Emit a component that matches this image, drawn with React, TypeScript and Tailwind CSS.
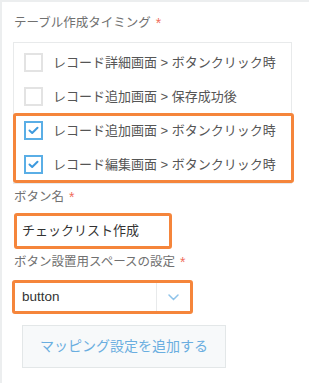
const FONT = "font-['Liberation_Sans','Noto_Sans_CJK_JP',sans-serif]";

interface CheckRowProps {
  label: string;
  checked?: boolean;
}

function CheckRow({ label, checked }: CheckRowProps) {
  return (
    <div className="flex h-[34px] items-center pl-[10px]">
      <span
        className={
          "flex h-[19px] w-[19px] items-center justify-center border-2 bg-white " +
          (checked ? "border-[#5aaee6]" : "border-[#e3e3e3]")
        }
      >
        {checked && (
          <svg width="11" height="9" viewBox="0 0 11 9" fill="none">
            <path d="M1.5 4.5 L4.2 7 L9.5 1.8" stroke="#3d9ade" strokeWidth="2" strokeLinecap="round" strokeLinejoin="round" />
          </svg>
        )}
      </span>
      <span className="ml-[10px] text-[13px] leading-none text-[#555]">{label}</span>
    </div>
  );
}

function Label({ text }: { text: string }) {
  return (
    <div className="flex h-[18px] items-center text-[12.5px] leading-none text-[#707070]">
      {text}
      <span className="ml-[5px] text-[14px] text-[#f06d5b]">*</span>
    </div>
  );
}

export default function App() {
  return (
    <div className={`${FONT} h-[383px] w-[309px] overflow-hidden border-l-2 border-t-2 border-[#eceeef] bg-white`}>
      <div className="pl-[12px] pr-[16px] pt-[12px]">
        <Label text="テーブル作成タイミング" />

        {/* Timing checkboxes */}
        <div className="relative mt-[10px] w-[279px] -ml-px border border-[#e8eaeb] pb-[2px] pt-[2px]">
          <CheckRow label="レコード詳細画面 > ボタンクリック時" />
          <CheckRow label="レコード追加画面 > 保存成功後" />
          <CheckRow label="レコード追加画面 > ボタンクリック時" checked />
          <CheckRow label="レコード編集画面 > ボタンクリック時" checked />
          {/* highlight */}
          <div className="absolute left-[-1px] top-[70px] h-[70px] w-[281px] rounded-[3px] border-[3.5px] border-[#f5853b]" />
        </div>

        <div className="mt-[4px]">
          <Label text="ボタン名" />
        </div>
        <div className="mt-[7px] flex h-[36px] w-[158px] items-center rounded-[3px] border-[3.5px] border-[#f5853b] pl-[5px] text-[13px] text-[#333]">
          チェックリスト作成
        </div>

        <div className="mt-[4px]">
          <Label text="ボタン設置用スペースの設定" />
        </div>
        <div className="-ml-[2px] mt-[9px] flex h-[34px] w-[181px] items-stretch rounded-[3px] border-[3.5px] border-[#f5853b] bg-white">
          <div className="flex flex-1 items-center pl-[7px] text-[13.5px] text-[#333]">button</div>
          <div className="flex w-[34px] items-center justify-center border-l border-[#e8eaeb]">
            <svg width="11" height="7" viewBox="0 0 11 7" fill="none">
              <path d="M1 1 L5.5 5.5 L10 1" stroke="#8ec3ea" strokeWidth="1.5" strokeLinecap="round" />
            </svg>
          </div>
        </div>

        <button className="ml-[8px] mt-[11px] flex h-[43px] w-[204px] items-center justify-center border border-[#e3e7e8] bg-[#f7f9fa] text-[14px] text-[#6aaee0]">
          マッピング設定を追加する
        </button>
      </div>
    </div>
  );
}
